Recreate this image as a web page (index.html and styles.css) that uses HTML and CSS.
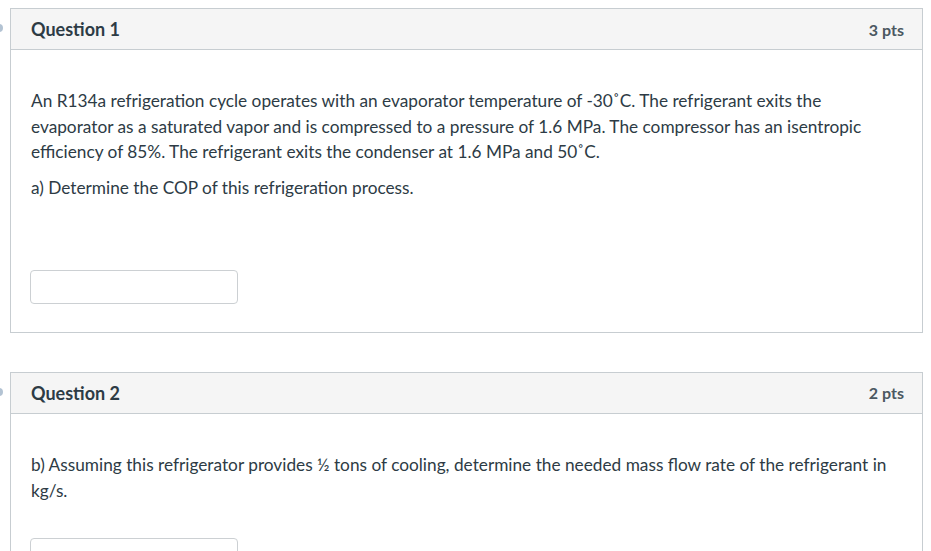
FILE: index.html
```html
<!DOCTYPE html>
<html lang="en">
<head>
<meta charset="utf-8">
<title>Quiz</title>
<link rel="stylesheet" href="styles.css">
</head>
<body>
<div class="quiz">
  <div class="question">
    <span class="flag"></span>
    <div class="q-header">
      <span class="q-name">Question 1</span>
      <span class="q-points">3 pts</span>
    </div>
    <div class="q-body">
      <p>An R134a refrigeration cycle operates with an evaporator temperature of -30˚C. The refrigerant exits the evaporator as a saturated vapor and is compressed to a pressure of 1.6 MPa. The compressor has an isentropic efficiency of 85%. The refrigerant exits the condenser at 1.6 MPa and 50˚C.</p>
      <p>a) Determine the COP of this refrigeration process.</p>
      <p class="spacer">&nbsp;</p>
      <div class="answer"><input class="answer-input" type="text" aria-label="Answer"></div>
    </div>
  </div>
  <div class="question">
    <span class="flag"></span>
    <div class="q-header">
      <span class="q-name">Question 2</span>
      <span class="q-points">2 pts</span>
    </div>
    <div class="q-body">
      <p>b) Assuming this refrigerator provides ½ tons of cooling, determine the needed mass flow rate of the refrigerant in kg/s.</p>
      <div class="answer"><input class="answer-input" type="text" aria-label="Answer"></div>
    </div>
  </div>
</div>
</body>
</html>
```

FILE: styles.css
```css
html, body {
  margin: 0;
  padding: 0;
  background: #ffffff;
}
body {
  font-family: Lato, "Open Sans", "Liberation Sans", sans-serif;
  color: #2d3b45;
  overflow: hidden;
}
.quiz {
  padding: 8px 8px 0 10px;
  display: flex;
  flex-direction: column;
  gap: 39px;
}
.question {
  position: relative;
  border: 1px solid #c7cdd1;
  background: #fff;
}
.flag {
  position: absolute;
  left: -14px;
  top: 15px;
  width: 6px;
  height: 8px;
  border-radius: 0 5px 5px 0;
  background: #b3c3d3;
}
.q-header {
  height: 41px;
  box-sizing: border-box;
  background: #f5f5f5;
  border-bottom: 1px solid #c7cdd1;
  display: flex;
  align-items: center;
  justify-content: space-between;
  padding: 0 18px 0 20px;
}
.q-name {
  font-weight: 700;
  font-size: 18px;
  color: #2d3b45;
}
.q-points {
  font-weight: 700;
  font-size: 16px;
  color: #4b5861;
}
.q-body {
  padding: 38px 20px 28px 20px;
  font-size: 17.25px;
  line-height: 25.6px;
}
.q-body p {
  margin: 0 0 10px 0;
}
.q-body p.spacer {
  margin-bottom: 9px;
}
.answer {
  padding-top: 25px;
}
.answer-input {
  display: block;
  box-sizing: border-box;
  width: 208px;
  height: 34px;
  margin: 0 0 0 -1px;
  border: 1px solid #ccd0d3;
  border-radius: 4px;
  background: #fff;
  font-family: inherit;
  font-size: 14px;
  padding: 4px 8px;
}
```
